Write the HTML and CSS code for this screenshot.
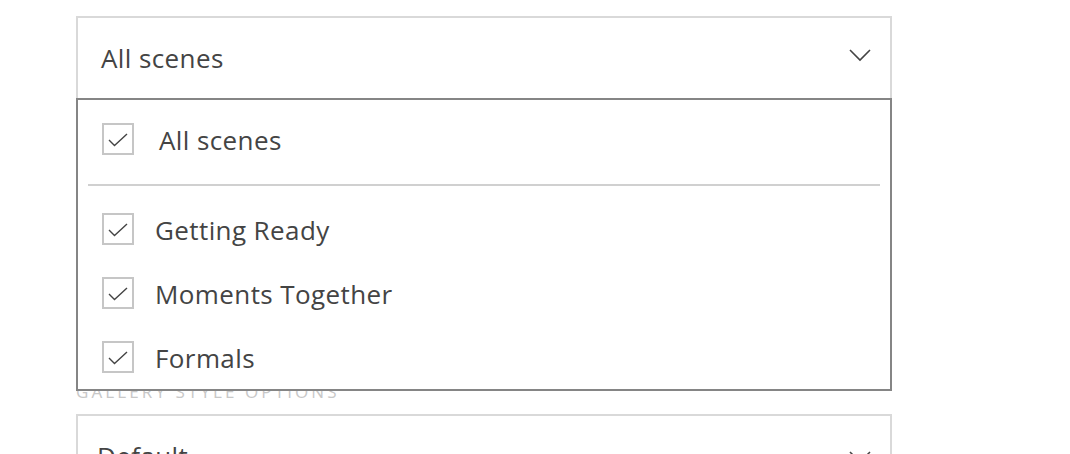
FILE: index.html
```html
<!DOCTYPE html>
<html>
<head>
<meta charset="utf-8">
<link rel="stylesheet" href="styles.css">
</head>
<body>
<div class="panel">
  <div class="field">
    <div class="select">
      <span class="select-value">All scenes</span>
      <svg class="chevron" width="24" height="14" viewBox="0 0 24 14"><polyline points="2,2 12,12 22,2" fill="none" stroke="#444" stroke-width="1.6"/></svg>
    </div>
    <div class="menu">
      <div class="row row-all">
        <span class="box"><svg width="20" height="14" viewBox="0 0 20 14"><polyline points="1,7 6.5,12.5 19,1" fill="none" stroke="#444" stroke-width="1.4"/></svg></span>
        <span class="label">All scenes</span>
      </div>
      <div class="sep"></div>
      <div class="row">
        <span class="box"><svg width="20" height="14" viewBox="0 0 20 14"><polyline points="1,7 6.5,12.5 19,1" fill="none" stroke="#444" stroke-width="1.4"/></svg></span>
        <span class="label">Getting Ready</span>
      </div>
      <div class="row">
        <span class="box"><svg width="20" height="14" viewBox="0 0 20 14"><polyline points="1,7 6.5,12.5 19,1" fill="none" stroke="#444" stroke-width="1.4"/></svg></span>
        <span class="label">Moments Together</span>
      </div>
      <div class="row">
        <span class="box"><svg width="20" height="14" viewBox="0 0 20 14"><polyline points="1,7 6.5,12.5 19,1" fill="none" stroke="#444" stroke-width="1.4"/></svg></span>
        <span class="label">Formals</span>
      </div>
    </div>
  </div>
  <div class="caption">GALLERY STYLE OPTIONS</div>
  <div class="select select-2">
    <span class="select-value">Default</span>
    <svg class="chevron" width="24" height="14" viewBox="0 0 24 14"><polyline points="2,2 12,12 22,2" fill="none" stroke="#444" stroke-width="1.6"/></svg>
  </div>
</div>
</body>
</html>
```
FILE: styles.css
```css
html, body {
  margin: 0;
  padding: 0;
  background: #fff;
}
body {
  font-family: "Open Sans", "Liberation Sans", sans-serif;
  color: #444;
}
.panel {
  width: 816px;
  padding: 16px 0 0 76px;
}
.field {
  position: relative;
  margin-bottom: 282px;
}
.select {
  box-sizing: border-box;
  height: 84px;
  border: 2px solid #d9d9d9;
  display: flex;
  align-items: center;
  justify-content: space-between;
  padding: 0 18px 0 23px;
}
.select-value {
  font-size: 26px;
  letter-spacing: 0.4px;
  color: #444;
  margin-top: 0;
}
.chevron {
  margin-top: -6px;
}
.menu {
  position: absolute;
  left: 0;
  top: 82px;
  z-index: 2;
  box-sizing: border-box;
  width: 816px;
  height: 293px;
  background: #fff;
  border: 2px solid #858585;
  padding: 7px 10px 0 10px;
}
.row {
  height: 64px;
  display: flex;
  align-items: center;
  padding-left: 14px;
  gap: 21px;
}
.row-all {
  gap: 25px;
}
.box {
  box-sizing: border-box;
  width: 32px;
  height: 32px;
  border: 2px solid #c6c6c6;
  display: flex;
  align-items: center;
  justify-content: center;
}
.box svg {
  margin-top: 1px;
}
.label {
  font-size: 26px;
  letter-spacing: 0.4px;
  color: #444;
  margin-top: 2px;
}
.sep {
  height: 2px;
  background: #d0d0d0;
  margin: 13px 0 11px 0;
}
.caption {
  font-size: 17px;
  letter-spacing: 3.1px;
  color: #c8c8c8;
  height: 20px;
  line-height: 20px;
  margin: 0 0 12px 0;
}
.select-2 {
  align-items: flex-start;
  padding: 22px 18px 0 19px;
}
.select-2 .chevron {
  margin-top: 12px;
}
```
